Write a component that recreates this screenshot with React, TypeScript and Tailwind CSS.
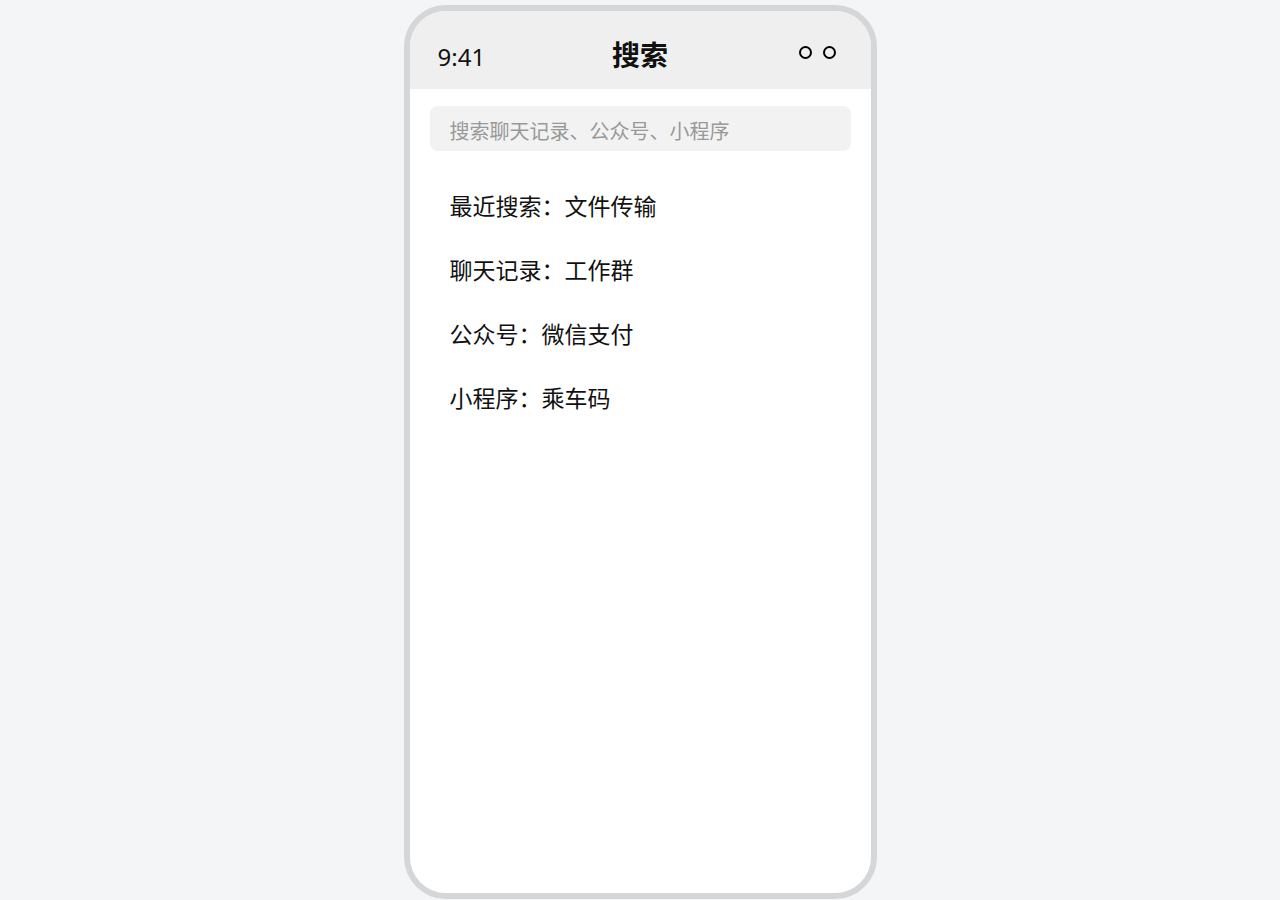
import React from 'react';

const items: { label: string; value: string }[] = [
    { label: '最近搜索', value: '文件传输' },
    { label: '聊天记录', value: '工作群' },
    { label: '公众号', value: '微信支付' },
    { label: '小程序', value: '乘车码' },
];

const font = { fontFamily: '"Noto Sans", "Noto Sans CJK SC", sans-serif' };

const App: React.FC = () => {
    return (
        <div className="min-h-screen bg-[#f4f5f7] flex justify-center pt-[5px]" style={font}>
            <div className="w-[473px] h-[894px] border-[6px] border-[#d4d6d8] rounded-[42px] overflow-hidden bg-white flex flex-col">
                {/* status / title bar */}
                <div className="h-[78px] bg-[#efefef] grid grid-cols-3 items-center px-[28px] shrink-0">
                    <span className="text-[24px] text-[#111] mt-[14px]">9:41</span>
                    <span className="text-center text-[28px] font-bold text-[#111] mt-[9px]">搜索</span>
                    <div className="flex justify-end gap-[11px] pr-[7px] mt-[4px]">
                        <span className="w-[13px] h-[13px] rounded-full border-2 border-black" />
                        <span className="w-[13px] h-[13px] rounded-full border-2 border-black" />
                    </div>
                </div>

                {/* search box */}
                <div className="mx-[20px] mt-[17px] h-[45px] rounded-lg bg-[#f2f2f2] flex items-center px-[20px] pt-[6px]">
                    <span className="text-[20px] text-[#999]">搜索聊天记录、公众号、小程序</span>
                </div>

                {/* history list */}
                <div className="mt-[23px] px-[40px] flex flex-col">
                    {items.map((item, index) => (
                        <div key={index} className="h-[64px] flex items-center text-[23px] text-[#111]">
                            {item.label}：{item.value}
                        </div>
                    ))}
                </div>
            </div>
        </div>
    );
};

export default App;
